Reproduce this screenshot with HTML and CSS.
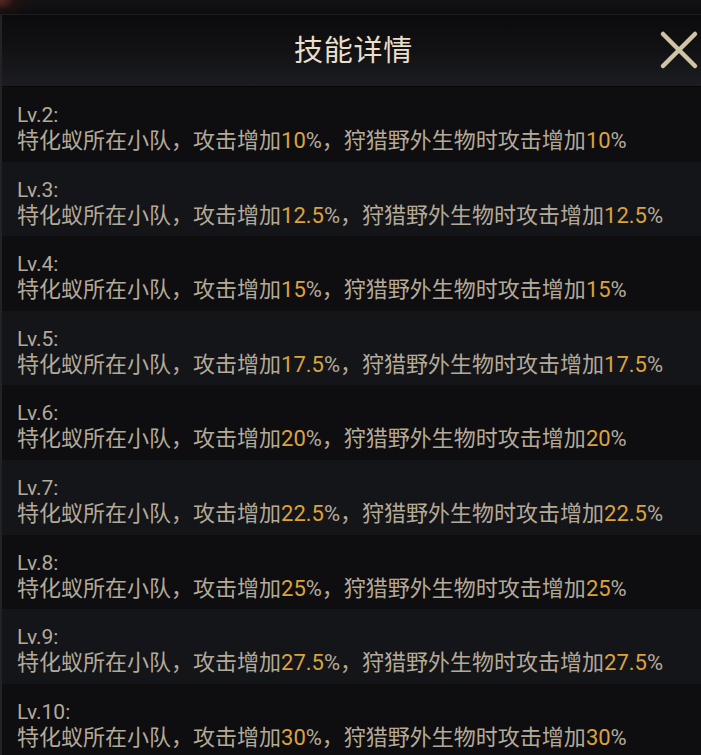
FILE: index.html
```html
<!DOCTYPE html>
<html lang="zh">
<head>
<meta charset="utf-8">
<title>技能详情</title>
<link rel="stylesheet" href="styles.css">
</head>
<body>
<div class="topstrip"></div>
<div class="panel">
  <header class="header">
    <h1 class="title">技能详情</h1>
    <button class="close" aria-label="关闭">
      <svg width="40" height="40" viewBox="0 0 40 40"><path d="M4 4 L36 36 M36 4 L4 36" stroke="#cfc5a5" stroke-width="4.5" stroke-linecap="round" fill="none"/></svg>
    </button>
  </header>
  <div class="list">
    <div class="row"><div class="lv">Lv.2:</div><div class="desc">特化蚁所在小队，攻击增加<span class="num">10</span>%，狩猎野外生物时攻击增加<span class="num">10</span>%</div></div>
    <div class="row"><div class="lv">Lv.3:</div><div class="desc">特化蚁所在小队，攻击增加<span class="num">12.5</span>%，狩猎野外生物时攻击增加<span class="num">12.5</span>%</div></div>
    <div class="row"><div class="lv">Lv.4:</div><div class="desc">特化蚁所在小队，攻击增加<span class="num">15</span>%，狩猎野外生物时攻击增加<span class="num">15</span>%</div></div>
    <div class="row"><div class="lv">Lv.5:</div><div class="desc">特化蚁所在小队，攻击增加<span class="num">17.5</span>%，狩猎野外生物时攻击增加<span class="num">17.5</span>%</div></div>
    <div class="row"><div class="lv">Lv.6:</div><div class="desc">特化蚁所在小队，攻击增加<span class="num">20</span>%，狩猎野外生物时攻击增加<span class="num">20</span>%</div></div>
    <div class="row"><div class="lv">Lv.7:</div><div class="desc">特化蚁所在小队，攻击增加<span class="num">22.5</span>%，狩猎野外生物时攻击增加<span class="num">22.5</span>%</div></div>
    <div class="row"><div class="lv">Lv.8:</div><div class="desc">特化蚁所在小队，攻击增加<span class="num">25</span>%，狩猎野外生物时攻击增加<span class="num">25</span>%</div></div>
    <div class="row"><div class="lv">Lv.9:</div><div class="desc">特化蚁所在小队，攻击增加<span class="num">27.5</span>%，狩猎野外生物时攻击增加<span class="num">27.5</span>%</div></div>
    <div class="row"><div class="lv">Lv.10:</div><div class="desc">特化蚁所在小队，攻击增加<span class="num">30</span>%，狩猎野外生物时攻击增加<span class="num">30</span>%</div></div>
  </div>
</div>
</body>
</html>
```
FILE: styles.css
```css
html, body {
  margin: 0;
  padding: 0;
  background: #0d0d0f;
  overflow: hidden;
  height: 755px;
}
body {
  font-family: Roboto, "Noto Sans CJK SC", sans-serif;
}
.topstrip {
  height: 14px;
  background: radial-gradient(ellipse 30px 20px at 0 0, #5a2a22 0%, rgba(40,18,16,0.6) 50%, rgba(14,14,16,0) 100%), linear-gradient(#141214, #0c0c0e);
  border-bottom: 1px solid #1e1e22;
}
.panel {
  border-left: 2px solid #232327;
}
.header {
  height: 71px;
  display: flex;
  align-items: center;
  justify-content: center;
  position: relative;
  background: linear-gradient(#0b0b0d 0%, #121215 50%, #1c1d22 100%);
  border-bottom: 1px solid #060607;
}
.title {
  margin: 0;
  font-family: "Noto Sans CJK SC", sans-serif;
  font-weight: 400;
  font-size: 29px;
  color: #e9dfcb;
  letter-spacing: 0.7px;
  transform: translate(2px, -3px);
}
.close {
  position: absolute;
  right: 2px;
  top: 15px;
  width: 40px;
  height: 40px;
  padding: 0;
  border: none;
  background: none;
}
.close svg { display: block; }
.list {
  display: flex;
  flex-direction: column;
}
.row {
  height: 74.6px;
  box-sizing: border-box;
  padding: 16px 0 0 15px;
  background: #0e0e11;
  color: #b4aa99;
  font-size: 22px;
  line-height: 25px;
  white-space: nowrap;
}
.row:nth-child(even) {
  background: #141519;
}
.lv {
  font-size: 21px;
}
.num {
  color: #dca33b;
}
```
